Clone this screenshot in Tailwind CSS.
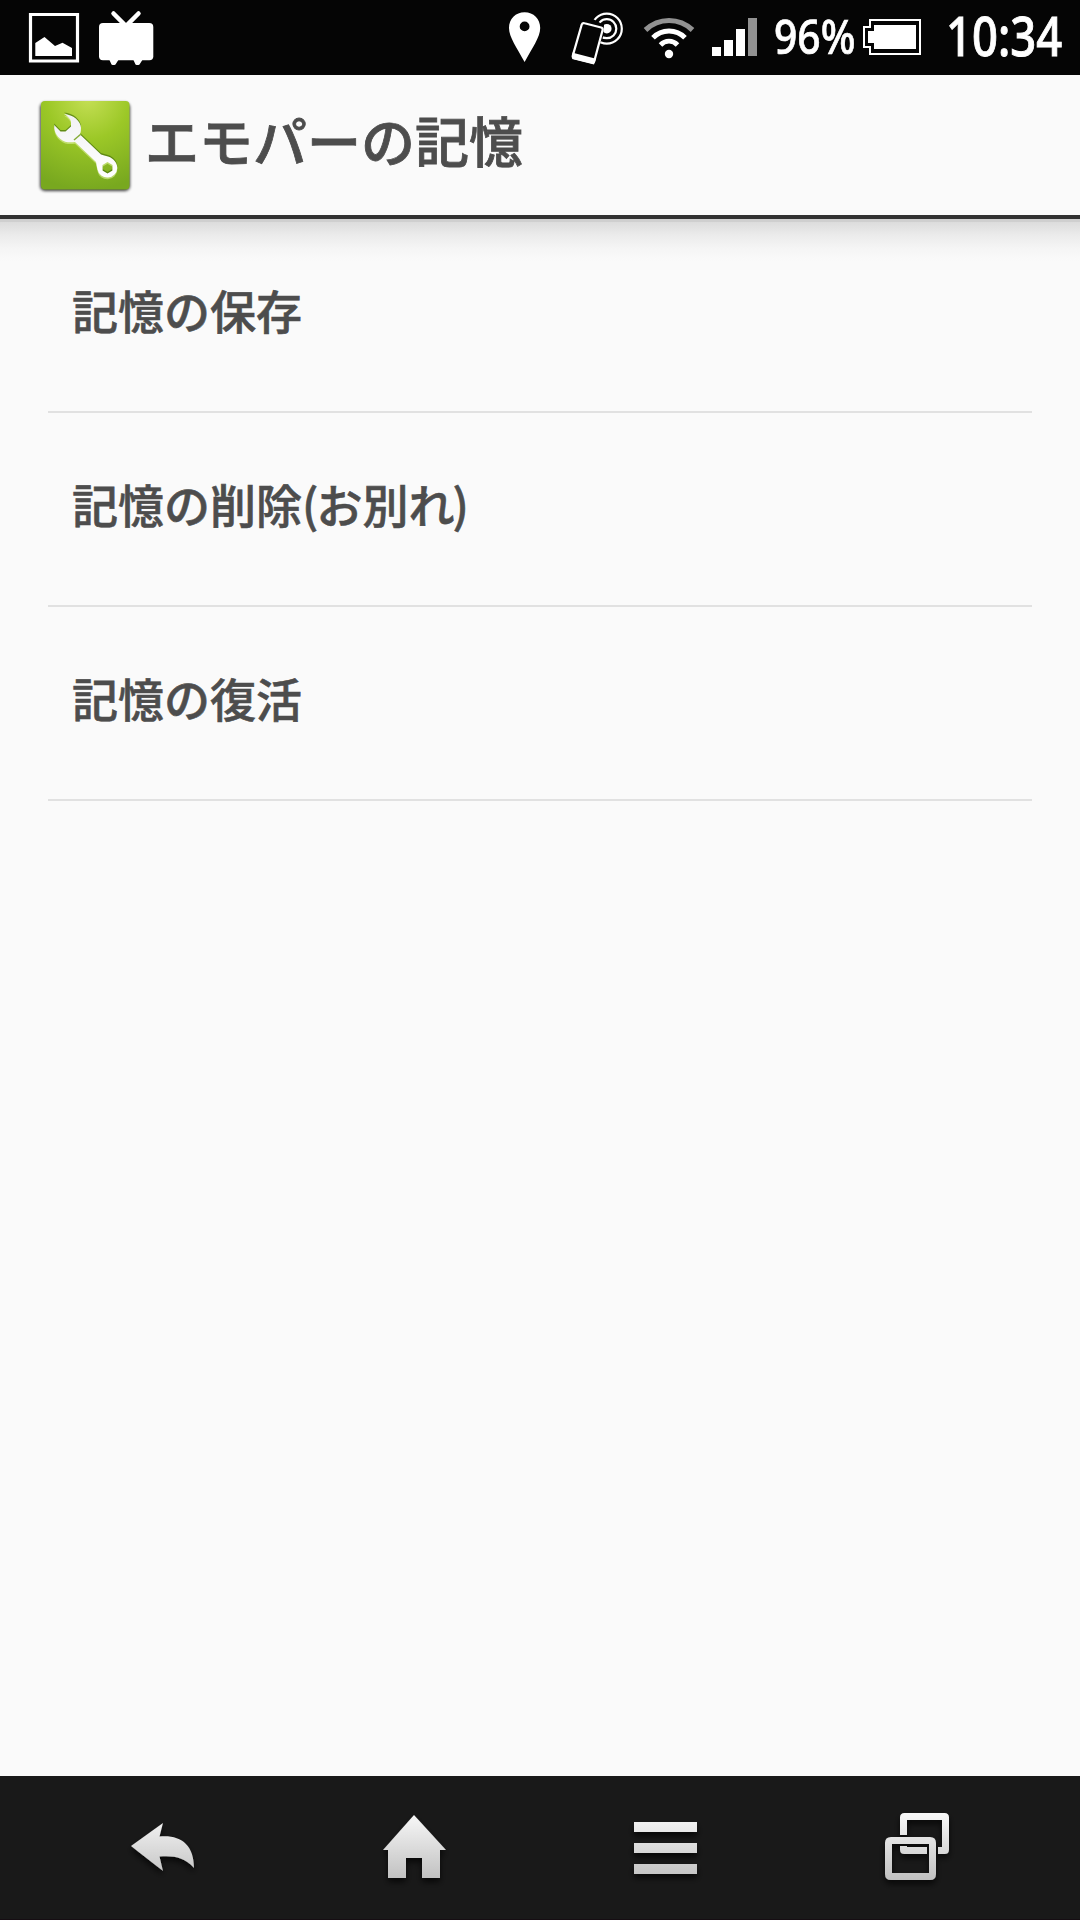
<!DOCTYPE html>
<html lang="ja">
<head>
<meta charset="utf-8">
<title>エモパーの記憶</title>
<script src="https://cdn.jsdelivr.net/npm/@tailwindcss/browser@4"></script>
</head>
<body class="flex h-[1920px] w-[1080px] flex-col overflow-hidden bg-[#fafafa] font-['Noto_Sans_CJK_JP',sans-serif] text-[#4d4d4d]">

<!-- Status bar -->
<header class="flex h-[75px] shrink-0 items-center bg-[#050505] pl-7 text-white *:shrink-0">
  <svg class="h-[75px] w-[52px]" viewBox="28 0 52 75" fill="#fff"><path d="M30.500 14.500H77.500V61H30.500Z" fill="none" stroke="#fff" stroke-width="3.200"/><path d="M35.300 56V43l9.200-6 10.500 9 7.500-3.200 9.500 5.200V56Z"/></svg>
  <svg class="ml-4 h-[75px] w-[60px]" viewBox="96 0 60 75" fill="#fff"><rect x="99" y="23" width="54.300" height="37.300" rx="4"/><path d="M113.500 13.500 126 26l12.500-12.500" fill="none" stroke="#fff" stroke-width="4.500" stroke-linecap="round"/><path d="M109 59h10l-3.500 5.500q-2 1-4 0ZM133 59h10l-3.500 5.500q-2 1-4 0Z"/></svg>
  <svg class="ml-[352px] h-[75px] w-[34px]" viewBox="508 0 34 75" fill="#fff"><path fill-rule="evenodd" d="M524.600 12.300c-9 0-15.600 6.700-15.600 15.700 0 9 8 20 15.600 34 7.600-14 15.600-25 15.600-34 0-9-6.600-15.700-15.600-15.700Zm0 9.200a4.900 4.900 0 1 1 0 9.800 4.900 4.900 0 0 1 0-9.800Z"/></svg>
  <svg class="ml-[28px] h-[75px] w-[56px]" viewBox="570 0 56 75" fill="none" stroke="#fff" stroke-width="2.200"><circle cx="606.800" cy="28.700" r="15"/><circle cx="606.800" cy="28.700" r="9.500"/><circle cx="606.800" cy="28.700" r="4.800" fill="#fff" stroke="none"/><path d="M582 19h11l11 6-1 12-8 16-18-20Z" fill="#050505" stroke="none"/><path d="m584.500 23.200 16.600 4.300q2 .6 1.500 2.600l-8.300 31q-.6 2-2.600 1.400L574.300 58.200q-2-.6-1.500-2.600l8.900-31q.8-2 2.800-1.400Z" fill="#050505"/><path d="m573.500 54 21 5.600-1.200 3.500-20-5Z" fill="#fff"/></svg>
  <svg class="ml-[16px] h-[75px] w-[54px]" viewBox="642 0 54 75" fill="none" stroke="#fff" stroke-width="5"><path d="M645.500 30q10-9.500 23.500-9.500t23.500 9.500" stroke="#929292" stroke-width="5.200"/><path d="M653 37.800q6.500-6.800 16-6.800t16 6.800"/><path d="M660.500 45q3.500-3.800 8.500-3.800t8.500 3.800" stroke-width="4.800"/><circle cx="669" cy="54" r="4.200" fill="#fff" stroke="none"/></svg>
  <svg class="ml-[14px] h-[75px] w-[50px]" viewBox="710 0 50 75" fill="#fff"><path d="M712 47h9v9h-9ZM724 40h9v16h-9ZM736 29h9v27h-9Z"/><path d="M748 18h9v38h-9Z" fill="#929292"/></svg>
  <div class="ml-[14px] flex h-[75px] w-[100px] items-start"><span class="origin-left scale-x-[.85] font-['Noto_Sans'] text-[48px] leading-[72px] font-medium [-webkit-text-stroke:0.7px_#fff]">96%</span></div>
  <svg class="-ml-3 h-[75px] w-[62px]" viewBox="862 0 62 75" fill="#fff"><path d="M870 20h50v34h-50v-7h-6V27h6Z" fill="none" stroke="#fff" stroke-width="2"/><path d="M874 25h42v24h-42v-6h-6V31h6Z"/></svg>
  <div class="ml-[22px] flex h-[75px] items-start"><span class="origin-left scale-x-[.84] font-['Noto_Sans'] text-[54px] leading-[71px] font-medium [-webkit-text-stroke:0.9px_#fff]">10:34</span></div>
</header>

<!-- Title bar -->
<div class="flex h-36 shrink-0 items-start border-b-4 border-[#313131] pl-[35px]">
  <svg class="mt-[20px] h-[100px] w-[100px]" viewBox="35 95 100 100">
    <defs>
      <radialGradient id="green" gradientUnits="userSpaceOnUse" cx="88" cy="98" r="92"><stop stop-color="#c5df55"/><stop offset=".45" stop-color="#9cc827"/><stop offset="1" stop-color="#78a81f"/></radialGradient>
      <linearGradient id="steel" x2="0" y2="1"><stop stop-color="#f2f2f4"/><stop offset="1" stop-color="#fff"/></linearGradient>
      <filter id="soft" x="-20%" y="-20%" width="140%" height="140%"><feGaussianBlur stdDeviation="1.700"/></filter>
      <path id="wrench" fill-rule="evenodd" d="M64 114C73 114.500 81 121 81 128Q81.200 131 79.800 134.200L101 154.500Q104 155.300 108 156.500C114 158.500 117.300 163 117.300 168A10 10 0 0 1 97.500 169.500Q96.500 165 96 162L75 142Q71.500 142.500 68 142.200C60.500 141.500 53.500 134 54.200 125L60.500 131.500H65.500L71 126.500V121.500Q70 117.500 64 114ZM107.500 162l-5 3v5.500l5 3 5-3V165Z"/>
    </defs>
    <rect x="40" y="102.500" width="90" height="88.500" rx="5" fill="#000" opacity=".75" filter="url(#soft)"/>
    <rect x="41" y="101" width="88.500" height="88.500" rx="4" fill="url(#green)"/>
    <use href="#wrench" y="-1.500" fill="#48740c" opacity=".7"/>
    <use href="#wrench" y="1.800" fill="#d6ed91" opacity=".65"/>
    <use href="#wrench" fill="url(#steel)"/>
    <path d="m74 140 7-6" stroke="#86ad38" stroke-width="1.500"/>
  </svg>
  <h1 class="ml-[10px] text-[54px] leading-[130px] font-medium [-webkit-text-stroke:0.8px_#4d4d4d]">エモパーの記憶</h1>
</div>

<!-- Memory actions -->
<main class="grow bg-[linear-gradient(to_bottom,#cfcfcf_0,#cfcfcf_3px,#dcdcdc_3px,#ebebeb_16px,#f5f5f5_29px,#fafafa_42px)] px-12">
  <ul class="[-webkit-text-stroke:0.6px_#4d4d4d]">
    <li class="h-[194px] border-b-2 border-[#e1e1e1] px-6 text-[46px] leading-[180px] font-medium">記憶の保存</li>
    <li class="h-[194px] border-b-2 border-[#e1e1e1] px-6 text-[46px] leading-[180px] font-medium">記憶の削除<span class="-mr-0.5">(</span>お別れ<span class="-ml-0.5">)</span></li>
    <li class="h-[194px] border-b-2 border-[#e1e1e1] px-6 text-[46px] leading-[180px] font-medium">記憶の復活</li>
  </ul>
</main>

<!-- Navigation bar -->
<nav class="flex h-36 shrink-0 border-b border-[#150d12] bg-[#191919] px-9">
  <svg class="h-[143px] w-[252px]" viewBox="36 1776 252 143">
    <defs>
      <linearGradient id="metal" gradientUnits="userSpaceOnUse" x1="0" y1="1814" x2="0" y2="1880"><stop stop-color="#f8f8f8"/><stop offset="1" stop-color="#c0c0c0"/></linearGradient>
      <filter id="drop" x="-20%" y="-20%" width="140%" height="160%"><feDropShadow dx="0" dy="4" stdDeviation="3" flood-color="#000" flood-opacity=".7"/></filter>
    </defs>
    <path filter="url(#drop)" fill="url(#metal)" d="M131 1846 163 1823 159.500 1836.500C180 1834.500 194 1844 194 1868 184 1857 174 1855.500 159.500 1856.500L163 1871Z"/>
  </svg>
  <svg class="h-[143px] w-[252px]" viewBox="288 1776 252 143"><path filter="url(#drop)" fill="url(#metal)" d="M414 1815 446 1850H440V1878H422V1858H406V1878H388V1850H383Z"/></svg>
  <svg class="h-[143px] w-[252px]" viewBox="540 1776 252 143"><path filter="url(#drop)" fill="url(#metal)" d="M634 1822h63v10h-63ZM634 1843h63v10h-63ZM634 1864h63v10h-63Z"/></svg>
  <svg class="h-[143px] w-[252px]" viewBox="792 1776 252 143">
    <g filter="url(#drop)">
      <path fill="url(#metal)" d="M900 1835V1817.500Q900 1813 904.500 1813H944.500Q949 1813 949 1817.500V1849.500Q949 1854 944.500 1854H938V1847H942V1820H907V1835ZM900 1846H907V1847H927V1854H904.500Q900 1854 900 1849.500Z"/>
      <path fill="url(#metal)" fill-rule="evenodd" d="M891 1837H930Q936 1837 936 1843V1874Q936 1880 930 1880H891Q885 1880 885 1874V1843Q885 1837 891 1837ZM892 1844V1873H929V1844Z"/>
    </g>
  </svg>
</nav>
</body>
</html>
